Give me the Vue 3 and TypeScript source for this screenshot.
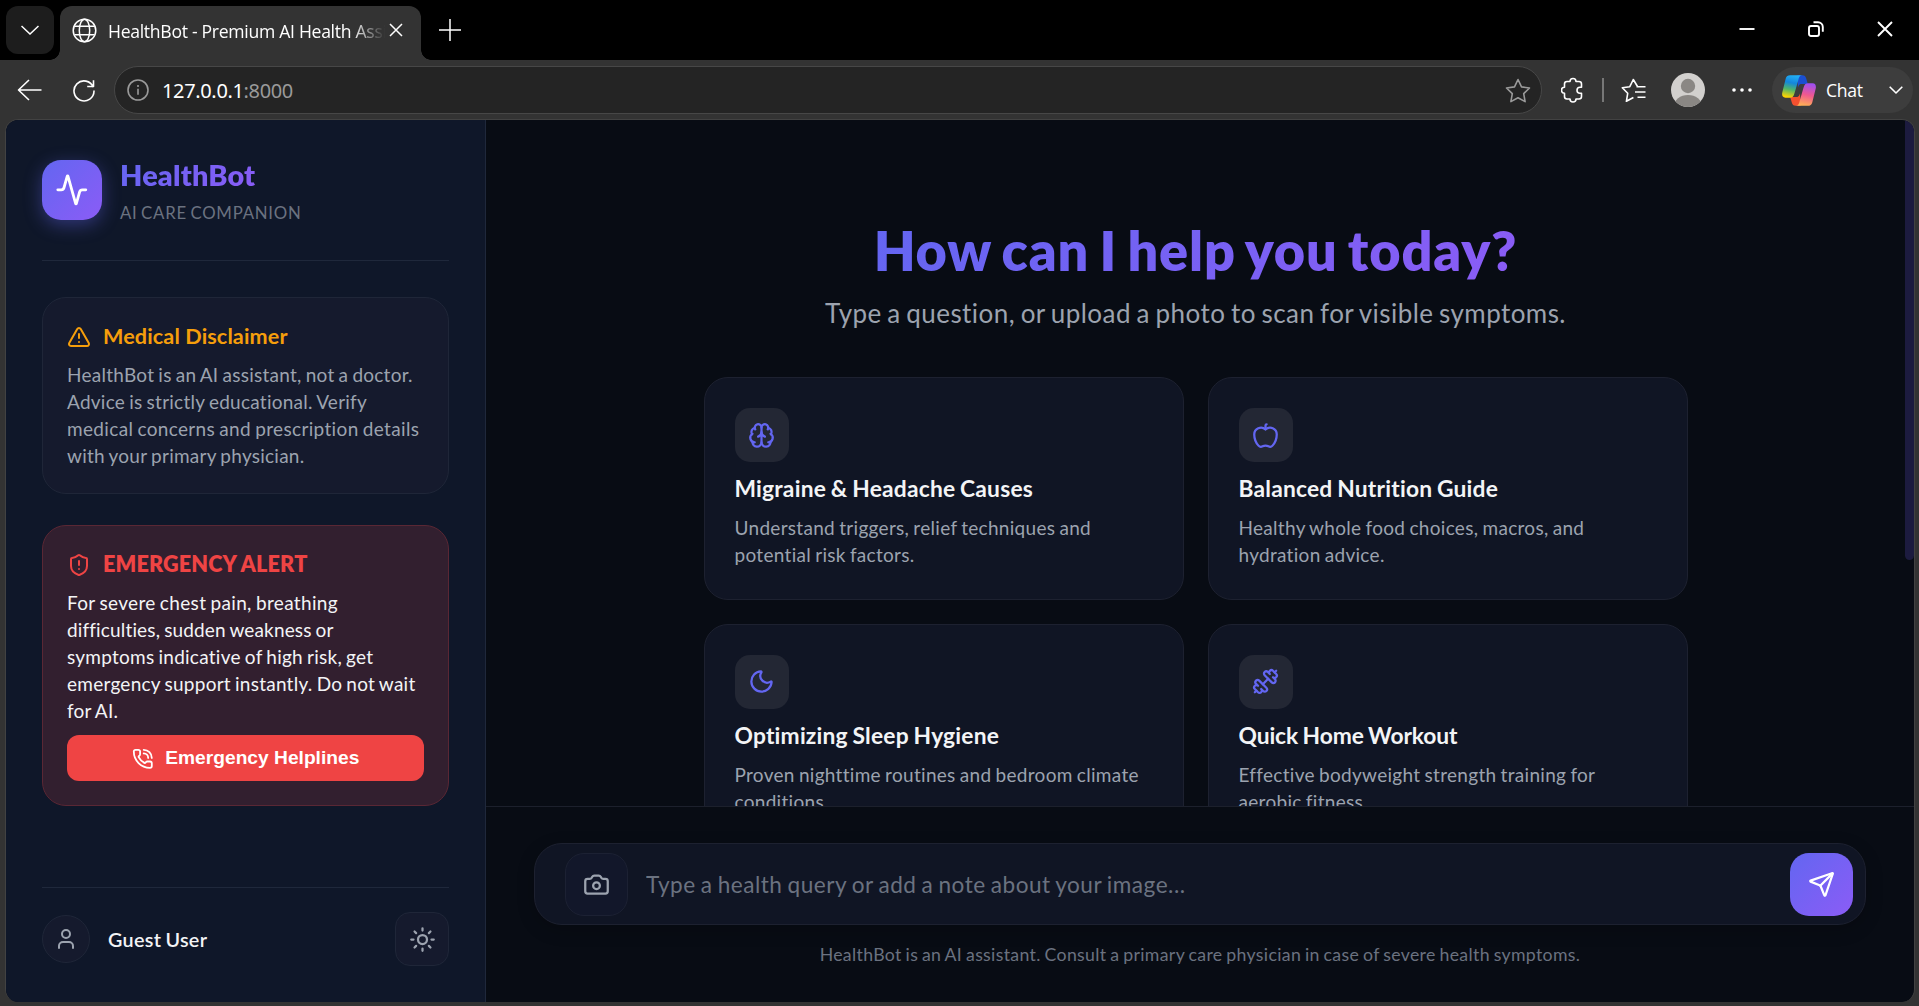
<template>
  <div class="window">
    <header class="tabstrip">
      <button class="tabstrip__menu" type="button" aria-label="Tab actions">
        <svg width="18" height="10" viewBox="0 0 18 10"><path d="M0.5 1 9 9l8.500-8" /></svg>
      </button>
      <div class="tab">
        <svg class="tab__globe" width="25" height="25" viewBox="0 0 25 25">
          <circle cx="12.500" cy="12.500" r="11.300" />
          <ellipse cx="12.500" cy="12.500" rx="5.200" ry="11.300" />
          <path d="M2.400 8.300h20.200M2.400 16.700h20.200" />
        </svg>
        <span class="tab__title">HealthBot - Premium AI Health Assistant</span>
        <svg class="tab__close" width="14" height="14" viewBox="0 0 14 14"><path d="m1 1 12 12M13 1 1 13" /></svg>
      </div>
      <svg class="tabstrip__plus" width="22" height="22" viewBox="0 0 22 22"><path d="M11 0v22M0 11h22" /></svg>
      <div class="tabstrip__controls">
        <svg width="16" height="16" viewBox="0 0 16 16"><path d="M0.500 8h15" /></svg>
        <svg width="16" height="16" viewBox="0 0 16 16">
          <rect x="1" y="5" width="10" height="10" rx="2" />
          <path d="M5.500 1.200H10a4.800 4.800 0 0 1 4.800 4.800v4.800" />
        </svg>
        <svg width="16" height="16" viewBox="0 0 16 16"><path d="m1 1 14 14M15 1 1 15" /></svg>
      </div>
    </header>

    <nav class="toolbar">
      <svg class="toolbar__back" width="25" height="22" viewBox="0 0 25 22"><path d="M12 1 1.500 11 12 21M1.500 11H24.500" /></svg>
      <svg class="toolbar__reload" width="24" height="24" viewBox="0 0 24 24"><path d="M21.300 9.200A10 10 0 1 0 22 12.500M21.500 2.200v6.300h-6.300" /></svg>
      <div class="address">
        <svg class="address__info" width="22" height="22" viewBox="0 0 22 22">
          <circle cx="11" cy="11" r="10" />
          <path d="M11 9.800v6M11 6v2" />
        </svg>
        <span class="address__url">127.0.0.1<em>:8000</em></span>
        <svg class="address__star" width="26" height="25" viewBox="0 0 26 25"><path :d="starPath" /></svg>
      </div>
      <svg class="toolbar__puzzle" width="24" height="26" viewBox="0 0 24 26">
        <path d="M6 4.500h3a3 3 0 0 1 6 0h3a2.500 2.500 0 0 1 2.500 2.500v3.200h-1.500a3 3 0 0 0 0 6h1.500v3.300a2.500 2.500 0 0 1-2.500 2.500h-3a3 3 0 0 1-6 0H6a2.500 2.500 0 0 1-2.500-2.500v-3.300a3 3 0 0 1 0-6V7A2.500 2.500 0 0 1 6 4.500Z" />
      </svg>
      <i class="toolbar__divider" />
      <svg class="toolbar__favs" width="25" height="25" viewBox="0 0 25 25">
        <path d="M16.500 8.500 12.300 1.500 8.800 8.700 1.300 9.800l5.400 5.500L5.400 23.300l7-3.800M15.500 8.800h9M14 14h10.500M16.500 19.200h8" />
      </svg>
      <svg class="toolbar__avatar" width="34" height="34" viewBox="0 0 34 34">
        <defs><clipPath id="avatar-clip"><circle cx="17" cy="17" r="17" /></clipPath></defs>
        <g clip-path="url(#avatar-clip)">
          <rect width="34" height="34" fill="#d2d0ce" />
          <circle cx="17" cy="13" r="7.200" fill="#8a8784" />
          <ellipse cx="17" cy="33" rx="14" ry="11" fill="#8a8784" />
        </g>
      </svg>
      <svg class="toolbar__dots" width="20" height="4" viewBox="0 0 20 4">
        <circle cx="2" cy="2" r="1.800" /><circle cx="10" cy="2" r="1.800" /><circle cx="18" cy="2" r="1.800" />
      </svg>
      <div class="copilot">
        <svg class="copilot__logo" width="34" height="31" viewBox="0 0 100 90">
          <defs>
            <linearGradient id="cp-left" x1="0.600" y1="0" x2="0.400" y2="1">
              <stop offset="0" stop-color="#22b0f5" /><stop offset="0.350" stop-color="#1486dc" />
              <stop offset="0.650" stop-color="#4fb56a" /><stop offset="1" stop-color="#ffd400" />
            </linearGradient>
            <linearGradient id="cp-right" x1="0.600" y1="0" x2="0.400" y2="1">
              <stop offset="0" stop-color="#a04ff0" /><stop offset="0.500" stop-color="#f0588f" />
              <stop offset="1" stop-color="#ffb055" />
            </linearGradient>
          </defs>
          <path fill="#1b4fd0" d="M45 0h15c7 0 9 3 11 9l5 17H58c-8 0-9 5-11 11Z" />
          <path fill="#f4502f" d="M55 90H40c-7 0-9-3-11-9l-5-17h18c8 0 9-5 11-11Z" />
          <path fill="url(#cp-left)" d="M24 0h36c-8 0-10 6-12 14L37 52c-3 10-6 14-14 14H10C1 66-1 58 1 50L11 10C13 3 17 0 24 0Z" />
          <path fill="url(#cp-right)" d="M76 90H40c8 0 10-6 12-14l11-38c3-10 6-14 14-14h13c9 0 11 8 9 16L89 80c-2 7-6 10-13 10Z" />
        </svg>
        <span class="copilot__label">Chat</span>
        <svg class="copilot__chevron" width="14" height="8" viewBox="0 0 14 8"><path d="m0.700 0.700 6.300 6.300 6.300-6.300" /></svg>
      </div>
    </nav>

    <div class="page">
      <aside class="sidebar">
        <div class="brand">
          <div class="brand__logo">
            <svg class="icon" width="33.600" height="33.600" viewBox="0 0 24 24"><path v-for="d in icons.activity" :key="d" :d="d" /></svg>
          </div>
          <div class="brand__text">
            <h1>HealthBot</h1>
            <p>AI CARE COMPANION</p>
          </div>
        </div>

        <section class="notice">
          <h2>
            <svg class="icon" width="24" height="24" viewBox="0 0 24 24"><path v-for="d in icons.warning" :key="d" :d="d" /></svg>
            Medical Disclaimer
          </h2>
          <p>
            HealthBot is an AI assistant, not a doctor.<br>
            Advice is strictly educational. Verify<br>
            <span class="loose">medical concerns and prescription details</span><br>
            with your primary physician.
          </p>
        </section>

        <section class="notice notice--alert">
          <h2>
            <svg class="icon" width="24" height="24" viewBox="0 0 24 24"><path v-for="d in icons.shield" :key="d" :d="d" /></svg>
            EMERGENCY ALERT
          </h2>
          <p>
            <span class="loose">For severe chest pain, breathing</span><br>
            <span class="tight">difficulties, sudden weakness or</span><br>
            symptoms indicative of high risk, get<br>
            emergency support instantly. Do not wait<br>
            for AI.
          </p>
          <button class="helpline" type="button">
            <svg class="icon" width="21.600" height="21.600" viewBox="0 0 24 24"><path v-for="d in icons.phone" :key="d" :d="d" /></svg>
            Emergency Helplines
          </button>
        </section>

        <div class="account">
          <span class="account__avatar">
            <svg class="icon" width="24" height="24" viewBox="0 0 24 24">
              <path d="M19 21v-2a4 4 0 0 0-4-4H9a4 4 0 0 0-4 4v2" />
              <circle cx="12" cy="7" r="4" />
            </svg>
          </span>
          <span class="account__name">Guest User</span>
          <button class="account__theme" type="button" aria-label="Toggle theme">
            <svg class="icon" width="27" height="27" viewBox="0 0 24 24">
              <circle cx="12" cy="12" r="4" />
              <path d="M12 2v2M12 20v2M4.930 4.930l1.410 1.410M17.660 17.660l1.410 1.410M2 12h2M20 12h2M6.340 17.660l-1.410 1.410M19.070 4.930l-1.410 1.410" />
            </svg>
          </button>
        </div>
      </aside>

      <main class="main">
        <div class="feed">
          <div class="feed__content">
            <h2 class="feed__title">How can I help you today?</h2>
            <p class="feed__sub">Type a question, or upload a photo to scan for visible symptoms.</p>
            <div class="cards">
              <article v-for="card in cards" :key="card.title" class="card">
                <div class="card__icon">
                  <svg class="icon" width="27" height="27" viewBox="0 0 24 24"><path v-for="d in card.icon" :key="d" :d="d" /></svg>
                </div>
                <h3 :class="{ snug: card.snug }">{{ card.title }}</h3>
                <p>{{ card.lines[0] }}<br>{{ card.lines[1] }}</p>
              </article>
            </div>
          </div>
          <div class="feed__scrollbar"><i /></div>
        </div>

        <div class="composer">
          <div class="composer__bar">
            <button class="composer__camera" type="button" aria-label="Upload photo">
              <svg class="icon" width="27" height="27" viewBox="0 0 24 24">
                <path v-for="d in icons.camera" :key="d" :d="d" />
                <circle cx="12" cy="13" r="3" />
              </svg>
            </button>
            <input v-model="query" type="text" placeholder="Type a health query or add a note about your image...">
            <button class="composer__send" type="button" aria-label="Send">
              <svg class="icon" width="27" height="27" viewBox="0 0 24 24"><path v-for="d in icons.send" :key="d" :d="d" /></svg>
            </button>
          </div>
          <p class="composer__note">
            HealthBot is an AI assistant. Consult a primary care physician in case of severe health symptoms.
          </p>
        </div>
      </main>
    </div>
  </div>
</template>

<script setup lang="ts">
import { ref } from 'vue'

interface Card {
  title: string
  lines: [string, string]
  icon: string[]
  snug?: boolean
}

const query = ref('')

const starPath = 'M13 1.500 16.500 8.900l8 1.100-5.800 5.600 1.400 8L13 19.800l-7.100 3.800 1.400-8L1.500 10l8-1.100Z'

const icons: Record<string, string[]> = {
  activity: ['M22 12h-2.480a2 2 0 0 0-1.930 1.460l-2.350 8.360a.25.25 0 0 1-.48 0L9.240 2.180a.25.25 0 0 0-.48 0l-2.350 8.360A2 2 0 0 1 4.490 12H2'],
  warning: ['m21.730 18-8-14a2 2 0 0 0-3.480 0l-8 14A2 2 0 0 0 4 21h16a2 2 0 0 0 1.730-3', 'M12 9v4', 'M12 17h.01'],
  shield: [
    'M20 13c0 5-3.500 7.500-7.660 8.950a1 1 0 0 1-.67-.01C7.500 20.500 4 18 4 13V6a1 1 0 0 1 1-1c2 0 4.500-1.200 6.240-2.720a1.170 1.170 0 0 1 1.520 0C14.510 3.810 17 5 19 5a1 1 0 0 1 1 1z',
    'M12 8v4',
    'M12 16h.01',
  ],
  phone: [
    'M13 2a9 9 0 0 1 9 9',
    'M13 6a5 5 0 0 1 5 5',
    'M13.832 16.568a1 1 0 0 0 1.213-.303l.355-.465A2 2 0 0 1 17 15h3a2 2 0 0 1 2 2v3a2 2 0 0 1-2 2A18 18 0 0 1 2 4a2 2 0 0 1 2-2h3a2 2 0 0 1 2 2v3a2 2 0 0 1-.8 1.600l-.468.351a1 1 0 0 0-.292 1.233 14 14 0 0 0 6.392 6.384',
  ],
  camera: ['M13.997 4a2 2 0 0 1 1.760 1.050l.486.9A2 2 0 0 0 18.003 7H20a2 2 0 0 1 2 2v9a2 2 0 0 1-2 2H4a2 2 0 0 1-2-2V9a2 2 0 0 1 2-2h1.997a2 2 0 0 0 1.759-1.048l.489-.904A2 2 0 0 1 10.004 4z'],
  send: [
    'M14.536 21.686a.5.5 0 0 0 .937-.024l6.500-19a.496.496 0 0 0-.635-.635l-19 6.500a.5.5 0 0 0-.024.937l7.930 3.180a2 2 0 0 1 1.112 1.110z',
    'm21.854 2.147-10.940 10.939',
  ],
}

const cards: Card[] = [
  {
    title: 'Migraine & Headache Causes',
    lines: ['Understand triggers, relief techniques and', 'potential risk factors.'],
    icon: [
      'M12 18V5',
      'M15 13a4.170 4.170 0 0 1-3-4 4.170 4.170 0 0 1-3 4',
      'M17.598 6.500A3 3 0 1 0 12 5a3 3 0 1 0-5.598 1.500',
      'M17.997 5.125a4 4 0 0 1 2.526 5.770',
      'M18 18a4 4 0 0 0 2-7.464',
      'M19.967 17.483A4 4 0 1 1 12 18a4 4 0 1 1-7.967-.517',
      'M6 18a4 4 0 0 1-2-7.464',
      'M6.003 5.125a4 4 0 0 0-2.526 5.770',
    ],
  },
  {
    title: 'Balanced Nutrition Guide',
    lines: ['Healthy whole food choices, macros, and', 'hydration advice.'],
    icon: [
      'M12 6.528V3a1 1 0 0 1 1-1h0',
      'M18.237 21A15 15 0 0 0 22 11a6 6 0 0 0-10-4.472A6 6 0 0 0 2 11a15.100 15.100 0 0 0 3.763 10 3 3 0 0 0 3.648.648 5.500 5.500 0 0 1 5.178 0A3 3 0 0 0 18.237 21',
    ],
  },
  {
    title: 'Optimizing Sleep Hygiene',
    lines: ['Proven nighttime routines and bedroom climate', 'conditions.'],
    icon: ['M20.985 12.486a9 9 0 1 1-9.473-9.472c.405-.022.617.46.402.803a6 6 0 0 0 8.268 8.268c.344-.215.825-.004.803.401'],
  },
  {
    title: 'Quick Home Workout',
    lines: ['Effective bodyweight strength training for', 'aerobic fitness.'],
    icon: [
      'M17.596 12.768a2 2 0 1 0 2.829-2.829l-1.768-1.767a2 2 0 0 0 2.828-2.829l-2.828-2.828a2 2 0 0 0-2.829 2.828l-1.767-1.768a2 2 0 1 0-2.829 2.829z',
      'm2.500 21.500 1.400-1.400',
      'm20.100 3.900 1.400-1.400',
      'M5.343 21.485a2 2 0 1 0 2.829-2.828l1.767 1.768a2 2 0 1 0 2.829-2.829l-6.364-6.364a2 2 0 1 0-2.829 2.829l1.768 1.767a2 2 0 0 0-2.828 2.829z',
      'm9.600 14.400 4.800-4.800',
    ],
    snug: true,
  },
]
</script>

<style>
body {
  background: #333333;
}
</style>

<style scoped>
.window {
  display: flex;
  flex-direction: column;
  width: 100vw;
  height: 100vh;
  overflow: hidden;
  background: #333333;
  font-family: Lato, sans-serif;
}

.window * {
  box-sizing: border-box;
}

h1,
h2,
h3,
p {
  margin: 0;
}

button {
  display: flex;
  align-items: center;
  justify-content: center;
  padding: 0;
  border: 0;
}

svg {
  display: block;
  flex: none;
}

.icon {
  fill: none;
  stroke: currentColor;
  stroke-width: 2;
  stroke-linecap: round;
  stroke-linejoin: round;
}

/* browser tabs */
.tabstrip {
  display: flex;
  flex: none;
  align-items: flex-start;
  height: 60px;
  padding: 6px 26px 0 6px;
  background: #000000;
}

.tabstrip svg {
  fill: none;
  stroke: #ffffff;
  stroke-width: 1.5;
}

.tabstrip__menu {
  width: 48px;
  height: 48px;
  border-radius: 12px;
  background: #1d1d1d;
}

.tab {
  position: relative;
  display: flex;
  align-items: center;
  width: 361px;
  height: 54px;
  margin-left: 6px;
  padding: 0 18px 6px 12px;
  border-radius: 12px 12px 0 0;
  background: #333333;
}

.tab::before,
.tab::after {
  position: absolute;
  bottom: 0;
  width: 10px;
  height: 10px;
  content: '';
}

.tab::before {
  left: -10px;
  background: radial-gradient(circle at 0 0, transparent 9.5px, #333333 10px);
}

.tab::after {
  right: -10px;
  background: radial-gradient(circle at 100% 0, transparent 9.5px, #333333 10px);
}

.tab__title {
  flex: 1;
  margin: 2px 4px 0 11px;
  overflow: hidden;
  color: #ffffff;
  font-family: 'Open Sans', sans-serif;
  font-size: 17.6px;
  letter-spacing: -0.3px;
  white-space: nowrap;
  -webkit-mask-image: linear-gradient(90deg, #000 calc(100% - 34px), transparent);
  mask-image: linear-gradient(90deg, #000 calc(100% - 34px), transparent);
}

.tabstrip__plus {
  margin: 13px 0 0 18px;
}

.tabstrip__controls {
  display: flex;
  gap: 53px;
  margin: 15px 0 0 auto;
}

.tabstrip__controls svg {
  stroke-width: 1.9;
}

/* address bar row */
.toolbar {
  display: flex;
  flex: none;
  align-items: center;
  height: 59px;
  padding: 1px 6px 0 17px;
}

.toolbar svg {
  fill: none;
  stroke: #ffffff;
  stroke-width: 1.6;
  stroke-linejoin: round;
}

.toolbar__reload {
  margin-left: 30px;
}

.address {
  display: flex;
  align-items: center;
  width: 1428px;
  height: 48px;
  margin-left: 18px;
  padding: 0 10px 0 12px;
  border: 1.5px solid #474747;
  border-radius: 24px;
  background: #242424;
}

.toolbar .address__info,
.toolbar .address__star {
  stroke: #9a9a9a;
}

.address__url {
  flex: 1;
  margin-left: 13px;
  color: #ffffff;
  font-family: 'Noto Sans', sans-serif;
  font-size: 20px;
  letter-spacing: -0.35px;
}

.address__url em {
  color: #9a9a9a;
  font-style: normal;
}

.toolbar__puzzle {
  margin-left: 19px;
}

.toolbar__divider {
  width: 2px;
  height: 24px;
  margin-left: 17px;
  background: #777777;
}

.toolbar__favs {
  margin-left: 17px;
}

.toolbar .toolbar__avatar {
  margin-left: 25px;
  stroke: none;
}

.toolbar .toolbar__dots {
  margin-left: 27px;
  fill: #ffffff;
  stroke: none;
}

.copilot {
  display: flex;
  align-items: center;
  width: 141px;
  height: 46px;
  margin-left: 20px;
  padding: 0 10px;
  border-radius: 23px;
  background: #3d3d3d;
}

.copilot__logo path {
  stroke: none;
}

.copilot__label {
  margin-left: 10px;
  color: #ffffff;
  font-family: 'Open Sans', sans-serif;
  font-size: 17.6px;
  letter-spacing: -0.3px;
}

.copilot__chevron {
  margin-left: auto;
}

/* web page */
.page {
  display: flex;
  flex: 1;
  margin: 0 4px 4px 5px;
  overflow: hidden;
  border: 1px solid #424242;
  border-bottom: 0;
  border-radius: 13px;
  background: #080c14;
}

.sidebar {
  display: flex;
  flex: none;
  flex-direction: column;
  width: 480px;
  padding: 37px 36px 36px;
  border-right: 1px solid #1f283b;
  background: #0f1729;
}

.brand {
  display: flex;
  flex: none;
  align-items: center;
  gap: 18px;
  height: 104px;
  padding-bottom: 37px;
  border-bottom: 1px solid #1f283b;
}

.brand__logo {
  display: flex;
  align-items: center;
  justify-content: center;
  width: 60px;
  height: 60px;
  border-radius: 19px;
  background: linear-gradient(135deg, #6366f1, #8b5cf6);
  box-shadow: 0 5px 18px rgba(99, 102, 241, 0.4);
  color: #ffffff;
}

.brand__text h1 {
  width: max-content;
  padding-top: 1px;
  background: linear-gradient(135deg, #6366f1, #8b5cf6);
  -webkit-background-clip: text;
  background-clip: text;
  color: transparent;
  font-size: 28.8px;
  font-weight: 800;
  letter-spacing: 0.2px;
  line-height: 35px;
}

.brand__text p {
  margin-top: 9px;
  color: #6b7280;
  font-size: 16.8px;
  letter-spacing: 0.75px;
  line-height: 22px;
  word-spacing: -1.5px;
}

.notice {
  margin-top: 36px;
  padding: 24px;
  border: 1px solid #1f2638;
  border-radius: 24px;
  background: #151a2d;
}

.notice h2 {
  display: flex;
  align-items: center;
  gap: 12px;
  padding-top: 1px;
  color: #f59e0b;
  font-size: 21.6px;
  font-weight: 700;
  letter-spacing: 0.12px;
  line-height: 27px;
}

.notice p {
  margin-top: 11px;
  color: #9ca3af;
  font-size: 19px;
  letter-spacing: 0.25px;
  line-height: 27.1px;
  white-space: nowrap;
  word-spacing: -1px;
}

.notice .loose {
  letter-spacing: 0.34px;
}

.notice .tight {
  letter-spacing: 0.15px;
}

.notice--alert {
  margin-top: 31px;
  border-color: #5a2734;
  background: #321f2f;
}

.notice--alert h2 {
  color: #ef4444;
  font-weight: 800;
  letter-spacing: 0.15px;
}

.notice--alert p {
  margin-top: 12px;
  color: #f3f4f6;
  line-height: 26.8px;
}

.helpline {
  gap: 12px;
  width: 100%;
  height: 46px;
  margin-top: 11px;
  border-radius: 12px;
  background: #ef4444;
  color: #ffffff;
  font-family: 'Liberation Sans', Arial, sans-serif;
  font-size: 19.2px;
  font-weight: 700;
}

.account {
  display: flex;
  align-items: center;
  height: 79px;
  margin-top: auto;
  padding-top: 24px;
  border-top: 1px solid #1f283b;
}

.account__avatar {
  display: flex;
  align-items: center;
  justify-content: center;
  width: 48px;
  height: 48px;
  border: 1px solid #1f2638;
  border-radius: 50%;
  background: #151a2d;
  color: #9ca3af;
}

.account__name {
  margin-left: 18px;
  color: #f3f4f6;
  font-size: 19.8px;
  font-weight: 600;
  letter-spacing: 0.3px;
  word-spacing: -1px;
}

.account__theme {
  width: 54px;
  height: 54px;
  margin-left: auto;
  border: 1px solid #1f2638;
  border-radius: 15px;
  background: #151a2d;
  color: #9ca3af;
}

.main {
  display: flex;
  flex: 1;
  flex-direction: column;
  min-width: 0;
}

.feed {
  display: flex;
  height: 686px;
  overflow: hidden;
}

.feed__content {
  flex: 1;
  padding-top: 98px;
  text-align: center;
}

.feed__scrollbar {
  width: 9px;
}

.feed__scrollbar i {
  display: block;
  height: 440px;
  border-radius: 0 0 5px 5px;
  background: #1c1b3f;
}

.feed__title {
  width: max-content;
  margin: 0 auto;
  background: linear-gradient(135deg, #6366f1, #8b5cf6);
  -webkit-background-clip: text;
  background-clip: text;
  color: transparent;
  font-size: 54px;
  font-weight: 800;
  letter-spacing: 0.85px;
  line-height: 66px;
  word-spacing: -3px;
}

.feed__sub {
  margin-top: 13px;
  color: #9ca3af;
  font-size: 26px;
  letter-spacing: 0.43px;
  line-height: 32px;
  word-spacing: -1.4px;
}

.cards {
  display: grid;
  grid-template-columns: 480px 480px;
  gap: 24px;
  justify-content: center;
  margin-top: 48px;
  text-align: left;
}

.card {
  height: 222.7px;
  padding: 30px;
  border: 1px solid #1d2130;
  border-radius: 24px;
  background: #101524;
}

.card__icon {
  display: flex;
  align-items: center;
  justify-content: center;
  width: 54px;
  height: 54px;
  border-radius: 15px;
  background: #232734;
  color: #6366f1;
}

.card h3 {
  margin-top: 12px;
  padding-top: 1px;
  color: #f3f4f6;
  font-size: 22.8px;
  font-weight: 700;
  letter-spacing: 0.2px;
  line-height: 27px;
  word-spacing: -1px;
}

.card .snug {
  letter-spacing: -0.1px;
}

.card p {
  margin-top: 12px;
  color: #9ca3af;
  font-size: 19px;
  letter-spacing: 0.3px;
  line-height: 27px;
  white-space: nowrap;
  word-spacing: -1px;
}

.composer {
  flex: 1;
  padding: 36px 48px 0;
  border-top: 1px solid #1c202c;
}

.composer__bar {
  display: flex;
  align-items: center;
  height: 82px;
  padding: 0 12px 0 30px;
  border: 1px solid #1d2130;
  border-radius: 28px;
  background: #101524;
  box-shadow: 0 5px 18px rgba(0, 0, 0, 0.2);
}

.composer__camera {
  width: 63px;
  height: 63px;
  border: 1px solid #1c2133;
  border-radius: 19px;
  background: #12172a;
  color: #9ca3af;
}

.composer input {
  flex: 1;
  margin-left: 18px;
  padding: 0;
  border: 0;
  outline: 0;
  background: none;
  color: #f3f4f6;
  font-family: inherit;
  font-size: 22.6px;
  letter-spacing: 0.49px;
  word-spacing: -1.1px;
}

.composer input::placeholder {
  color: #6b7280;
}

.composer__send {
  width: 63px;
  height: 63px;
  border-radius: 19px;
  background: linear-gradient(135deg, #6366f1, #8b5cf6);
  color: #ffffff;
}

.composer__note {
  margin-top: 19px;
  color: #6b7280;
  font-size: 17.7px;
  letter-spacing: 0.33px;
  line-height: 22px;
  text-align: center;
  word-spacing: -1px;
}
</style>
